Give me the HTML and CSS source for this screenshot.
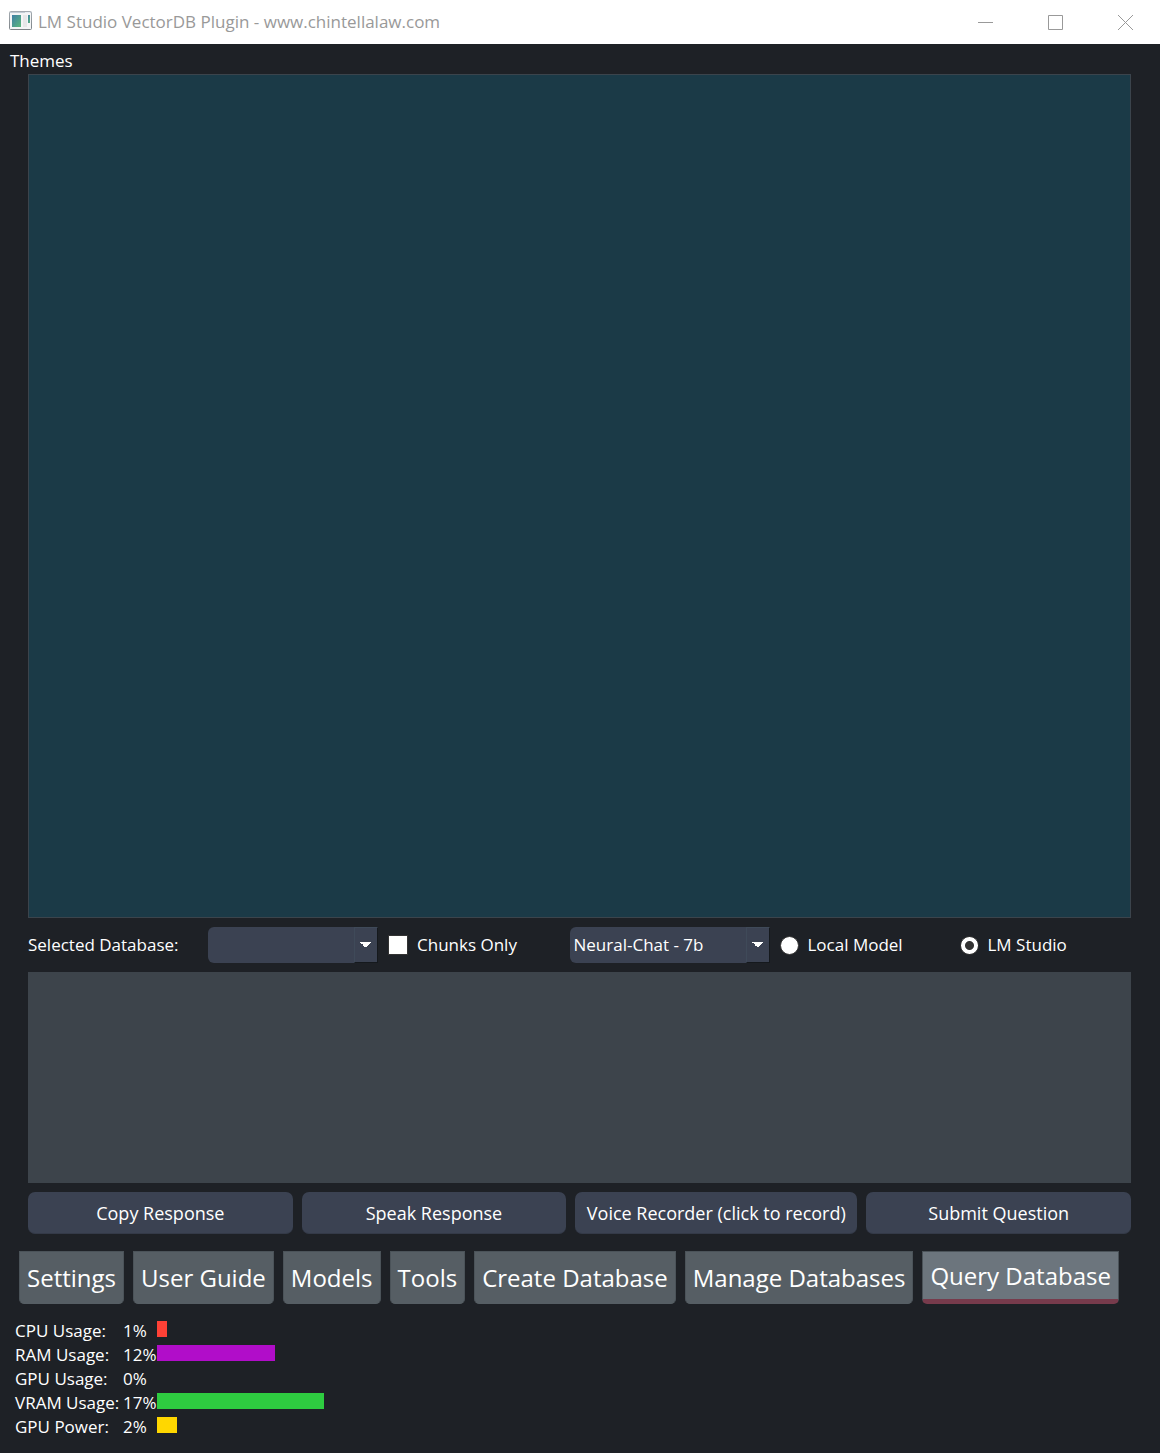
FILE: index.html
```html
<!DOCTYPE html>
<html lang="en">
<head>
<meta charset="utf-8">
<meta name="viewport" content="width=device-width, initial-scale=1">
<title>LM Studio VectorDB Plugin - www.chintellalaw.com</title>
<link rel="stylesheet" href="styles.css">
</head>
<body>
<div class="window">
  <header class="titlebar">
    <svg class="app-icon" width="23" height="19" viewBox="0 0 23 19" aria-hidden="true">
      <defs>
        <linearGradient id="pane" x1="0" y1="0" x2="1" y2="1">
          <stop offset="0" stop-color="#3f7fa6"/>
          <stop offset="1" stop-color="#5cb87c"/>
        </linearGradient>
        <linearGradient id="frame" x1="0" y1="0" x2="0" y2="1">
          <stop offset="0" stop-color="#a4abb1"/>
          <stop offset="1" stop-color="#7d8387"/>
        </linearGradient>
      </defs>
      <rect x=".5" y=".5" width="22" height="18" rx="1" fill="#f4f5f6" stroke="url(#frame)"/>
      <path d="M1 1.500h21" stroke="#c3ccd6"/>
      <path d="M16 1.500h5" stroke="#e8edf2"/>
      <rect x="3" y="4" width="9" height="12" fill="url(#pane)"/>
      <rect x="14" y="4" width="4" height="12" fill="#e6e7e8"/>
      <rect x="19" y="4" width="2" height="8" fill="url(#pane)"/>
    </svg>
    <h1 class="title">LM Studio VectorDB Plugin - www.chintellalaw.com</h1>
    <div class="window-controls">
      <button type="button" class="window-button" aria-label="Minimize">
        <svg width="15" height="15" viewBox="0 0 15 15"><path d="M0 7.500h15"/></svg>
      </button>
      <button type="button" class="window-button" aria-label="Maximize">
        <svg width="15" height="15" viewBox="0 0 15 15"><path d="M.5.5h14v14H.5z"/></svg>
      </button>
      <button type="button" class="window-button" aria-label="Close">
        <svg width="15" height="15" viewBox="0 0 15 15"><path d="M0 0l15 15M15 0L0 15"/></svg>
      </button>
    </div>
  </header>

  <nav class="menubar"><button type="button" class="menu-item">Themes</button></nav>

  <main class="query">
    <textarea class="response" readonly aria-label="Response"></textarea>

    <div class="options">
      <label for="database">Selected Database:</label>
      <span class="combo">
        <select id="database"><option></option></select>
      </span>
      <label class="choice"><input type="checkbox" class="tick">Chunks Only</label>
      <span class="combo">
        <select aria-label="Chat model"><option>Neural-Chat - 7b</option></select>
      </span>
      <label class="choice"><input type="radio" name="source" class="radio">Local Model</label>
      <label class="choice"><input type="radio" name="source" class="radio" checked>LM Studio</label>
    </div>

    <textarea class="question" aria-label="Question"></textarea>

    <div class="actions">
      <button type="button" class="action">Copy Response</button>
      <button type="button" class="action">Speak Response</button>
      <button type="button" class="action">Voice Recorder (click to record)</button>
      <button type="button" class="action">Submit Question</button>
    </div>
  </main>

  <nav class="tabs">
    <button type="button" class="tab">Settings</button>
    <button type="button" class="tab">User Guide</button>
    <button type="button" class="tab">Models</button>
    <button type="button" class="tab">Tools</button>
    <button type="button" class="tab">Create Database</button>
    <button type="button" class="tab">Manage Databases</button>
    <button type="button" class="tab tab-active" aria-current="page">Query Database</button>
  </nav>

  <footer class="status">
    <table class="usage">
      <colgroup><col class="col-name"><col class="col-value"><col></colgroup>
      <tbody>
        <tr><th scope="row">CPU Usage:</th><td>1%</td><td><div class="bar bar-cpu" style="width: 1%"></div></td></tr>
        <tr><th scope="row">RAM Usage:</th><td>12%</td><td><div class="bar bar-ram" style="width: 12%"></div></td></tr>
        <tr><th scope="row">GPU Usage:</th><td>0%</td><td><div class="bar bar-gpu" style="width: 0%"></div></td></tr>
        <tr><th scope="row">VRAM Usage:</th><td>17%</td><td><div class="bar bar-vram" style="width: 17%"></div></td></tr>
        <tr><th scope="row">GPU Power:</th><td>2%</td><td><div class="bar bar-power" style="width: 2%"></div></td></tr>
      </tbody>
    </table>
  </footer>
</div>
</body>
</html>
```

FILE: styles.css
```css
* {
  box-sizing: border-box;
}

body {
  margin: 0;
  background: #1e2126;
  color: #fff;
  font: 17px/24px "Open Sans", "Noto Sans", sans-serif;
}

button,
select,
textarea {
  margin: 0;
  border: 0;
  color: inherit;
  font: inherit;
}

.window {
  display: flex;
  flex-direction: column;
  min-height: 100vh;
}

.titlebar {
  display: flex;
  align-items: center;
  height: 44px;
  padding-left: 9px;
  background: #fff;
  color: #999;
}

.app-icon {
  flex: none;
  margin-bottom: 3px;
}

.title {
  flex: 1;
  margin: 0 0 0 6px;
  font-size: 17px;
  font-weight: 400;
}

.window-controls {
  display: flex;
}

.window-button {
  display: grid;
  place-items: center;
  width: 70px;
  height: 43px;
  padding: 0;
  background: none;
}

.window-button path {
  fill: none;
  stroke: #999;
}

.menubar {
  display: flex;
  height: 30px;
  padding: 4px 10px 0;
}

.menu-item {
  padding: 0;
  background: none;
}

.query {
  display: flex;
  flex: 1;
  flex-direction: column;
  gap: 9px;
  padding: 0 29px 0 28px;
}

.response,
.question {
  display: block;
  width: 100%;
  padding: 0 8px;
  resize: none;
  outline: none;
}

.response {
  flex: 4 0 0px;
  border: 1px solid #3b444c;
  background: #1b3a47;
}

.question {
  flex: 1 0 0px;
  background: #3d444b;
}

.options {
  display: grid;
  grid-template-columns: 170px 170px 1fr 200px 170px 1fr;
  gap: 10px;
  align-items: center;
}

.choice {
  display: flex;
  align-items: center;
  gap: 9px;
}

.combo {
  display: grid;
  height: 36px;
}

.combo select {
  grid-area: 1 / 1;
  width: 100%;
  padding: 0 24px 0 4px;
  border-radius: 6px;
  background: #3b4252;
  appearance: none;
}

.combo::after {
  content: "";
  grid-area: 1 / 1;
  justify-self: end;
  width: 22px;
  border: 1px solid #3f4a59;
  border-right-color: #15191d;
  border-bottom-color: #15191d;
  background:
    linear-gradient(to bottom right, #fff 50%, transparent 50%) 11px 14px / 6px 6px no-repeat,
    linear-gradient(to bottom left, #fff 50%, transparent 50%) 5px 14px / 6px 6px no-repeat,
    #3b4252;
  pointer-events: none;
}

.tick,
.radio {
  flex: none;
  margin: 0;
  background: #fff;
  appearance: none;
}

.tick {
  width: 20px;
  height: 20px;
  border: 1px solid #333;
}

.tick:checked {
  box-shadow: inset 0 0 0 4px #fff;
  background: #333;
}

.radio {
  width: 19px;
  height: 19px;
  border: 1px solid #333;
  border-radius: 50%;
}

.radio:checked {
  background: radial-gradient(circle, #333 4px, #fff 5px);
}

.actions {
  display: grid;
  grid-template-columns: 1fr 1fr 282px 1fr;
  gap: 9px;
}

.action {
  height: 42px;
  padding: 0 4px;
  border-bottom: 1px solid #343a48;
  border-radius: 7px;
  background: #3b4252;
  font-size: 18px;
  white-space: nowrap;
}

.tabs {
  display: flex;
  gap: 9px;
  padding: 17px 19px 0;
}

.tab {
  height: 53px;
  padding: 0 7px;
  border: 1px solid #4b5359;
  border-bottom-color: #565e64;
  border-radius: 0 0 5px 5px;
  background: #565e64;
  font-size: 24px;
  white-space: nowrap;
}

.tab-active {
  border-bottom: 5px solid #773b4c;
  background: #6c757d;
}

.status {
  padding: 15px 20px 14px 15px;
}

.usage {
  width: 100%;
  border-collapse: collapse;
  table-layout: fixed;
}

.col-name {
  width: 108px;
}

.col-value {
  width: 34px;
}

.usage tr {
  height: 24px;
}

.usage th,
.usage td {
  padding: 0;
  font-weight: 400;
  text-align: left;
  white-space: nowrap;
}

.bar {
  height: 16px;
  margin-bottom: 4px;
}

.bar-cpu {
  background: #ff4136;
}

.bar-ram {
  background: #b10dc9;
}

.bar-gpu {
  background: #0074d9;
}

.bar-vram {
  background: #2ecc40;
}

.bar-power {
  background: #ffd700;
}
```
